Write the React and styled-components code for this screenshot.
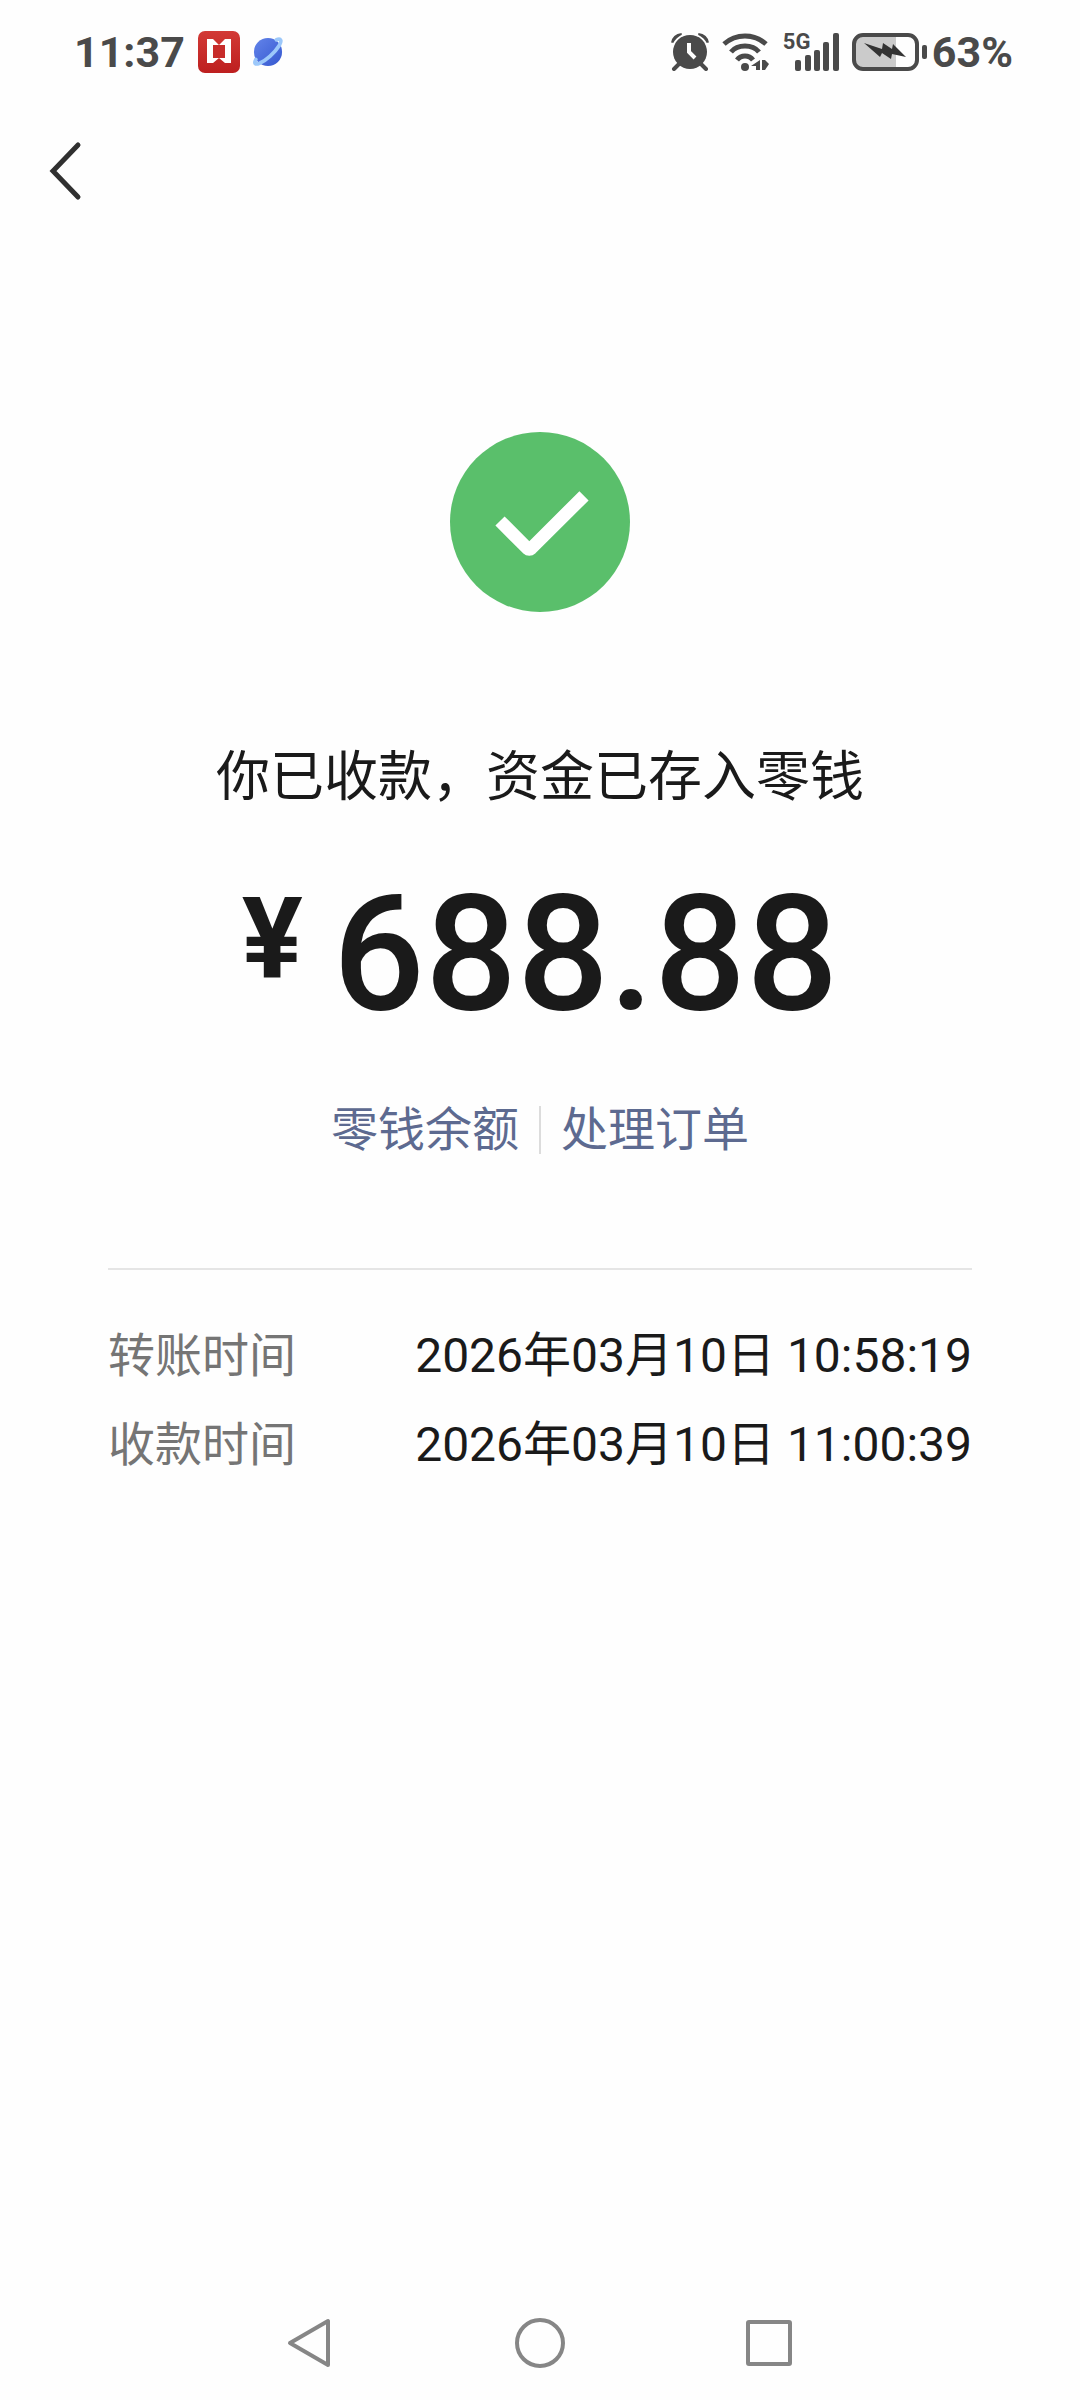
import React from 'react';
import styled, { createGlobalStyle } from 'styled-components';

const GlobalStyle = createGlobalStyle`
    * {
        box-sizing: border-box;
    }
    body {
        margin: 0;
        background: #fefefe;
        color: #1a1a1a;
        font-family: Roboto, 'Noto Sans CJK SC', sans-serif;
    }
    svg {
        display: block;
        flex: none;
    }
`;

const Page = styled.div`
    display: flex;
    flex-direction: column;
    min-height: 100vh;
`;

const StatusBar = styled.div`
    display: flex;
    align-items: center;
    justify-content: space-between;
    height: 103px;
    padding: 0 67px 0 74px;
    color: #4a4a4a;
`;

const StatusGroup = styled.div`
    display: flex;
    align-items: center;
    gap: ${props => props.$gap}px;
`;

const StatusText = styled.span`
    font-size: 43px;
    font-weight: 700;
    line-height: 52px;
`;

const Signal = styled.div`
    position: relative;
    padding-left: 12px;
`;

const NetType = styled.span`
    position: absolute;
    top: 0;
    left: 0;
    font-size: 22px;
    font-weight: 700;
    line-height: 18px;
`;

const Header = styled.header`
    display: flex;
    align-items: center;
    height: 136px;
    padding: 0 36px;
`;

const IconButton = styled.button`
    display: flex;
    align-items: center;
    justify-content: center;
    min-width: 50px;
    height: 64px;
    padding: 0;
    border: 0;
    background: none;
    color: inherit;
`;

const Main = styled.main`
    display: flex;
    flex-direction: column;
    align-items: center;
    padding: 193px 108px 0;
`;

const Title = styled.h1`
    margin: 128px 0 0;
    font-size: 54px;
    font-weight: 400;
    line-height: 76px;
`;

const Amount = styled.div`
    display: flex;
    align-items: flex-start;
    gap: 30px;
    margin-top: 43px;
    font-size: 162px;
    font-weight: 500;
    line-height: 190px;
`;

const Currency = styled.span`
    padding-top: 23px;
    font-size: 114px;
    font-weight: 700;
    line-height: 114px;
`;

const Links = styled.nav`
    display: flex;
    align-items: center;
    margin-top: 57px;
`;

const TextLink = styled.a`
    padding: 0 20px;
    color: #5d6a90;
    font-size: 47px;
    line-height: 48px;
    text-decoration: none;

    & + & {
        border-left: 2px solid #dcdcdc;
    }
`;

const Details = styled.dl`
    width: 100%;
    margin: 114px 0 0;
    padding-top: 41px;
    border-top: 2px solid #e5e5e5;
`;

const DetailRow = styled.div`
    display: flex;
    justify-content: space-between;
    font-size: 47px;
    line-height: 89px;

    dt {
        color: #757575;
    }
    dd {
        margin: 0;
        font-size: 48px;
    }
`;

const NavBar = styled.nav`
    display: flex;
    justify-content: center;
    gap: 180px;
    margin-top: auto;
    padding-bottom: 25px;
    color: #868686;
`;

const details = [
    { id: 1, label: '转账时间', value: '2026年03月10日 10:58:19' },
    { id: 2, label: '收款时间', value: '2026年03月10日 11:00:39' },
];

const RedAppIcon = () => (
    <svg width="42" height="42" viewBox="0 0 42 42">
        <defs>
            <linearGradient id="red" x1="0" y1="0" x2="0" y2="1">
                <stop offset="0" stopColor="#d23a36" />
                <stop offset="1" stopColor="#bd1f1f" />
            </linearGradient>
        </defs>
        <rect width="42" height="42" rx="7" fill="url(#red)" />
        <path d="M9 8h6l6 6 6-6h6v24h-6l-6-5-6 5H9z" fill="#fff" />
        <path d="M15 14h12v13H15z" fill="#c72c2a" />
    </svg>
);

const PlanetIcon = () => (
    <svg width="30" height="30" viewBox="0 0 32 32">
        <defs>
            <linearGradient id="planet" x1="0" y1="0" x2="1" y2="1">
                <stop offset="0" stopColor="#6384ea" />
                <stop offset="1" stopColor="#3558cf" />
            </linearGradient>
        </defs>
        <circle cx="16" cy="16" r="15" fill="url(#planet)" />
        <path
            d="M25 3C30 1 31 4 28 9C23 17 14 25 7 28C2 30 1 28 3 24"
            fill="none"
            stroke="#9cc8fa"
            strokeWidth="4"
            strokeLinecap="round"
        />
    </svg>
);

const AlarmIcon = () => (
    <svg width="38" height="38" viewBox="0 0 38 38" fill="none" stroke="currentColor">
        <path d="M3 10Q4 4 11 3M27 3Q34 4 35 10" strokeWidth="6" />
        <path d="M8 31l-5 5M30 31l5 5" strokeWidth="4" strokeLinecap="round" />
        <circle cx="19" cy="19" r="18" stroke="#fefefe" strokeWidth="2" strokeDasharray="56 57" strokeDashoffset="56" />
        <circle cx="19" cy="19" r="17" fill="currentColor" stroke="none" />
        <path d="M18 10v9l6 6" stroke="#fefefe" strokeWidth="4" />
    </svg>
);

const WifiIcon = () => (
    <svg width="48" height="38" viewBox="0 0 48 38" fill="none" stroke="currentColor" strokeWidth="5">
        <path d="M2 11Q11 3 23 3T44 11" />
        <path d="M9 19Q14 13 23 13T37 19" />
        <path d="M15 27Q18 23 23 23T31 27" />
        <circle cx="23" cy="34" r="4" fill="currentColor" stroke="none" />
        <path d="M38 27v10h-4v-4h-5zM40 27h3l4 4-4 6h-3z" fill="currentColor" stroke="none" />
    </svg>
);

const SignalIcon = () => (
    <svg width="44" height="38" viewBox="0 0 44 38" fill="currentColor">
        <rect x="0" y="27" width="6" height="11" rx="2" />
        <rect x="10" y="22" width="6" height="16" rx="2" />
        <rect x="19" y="17" width="6" height="21" rx="2" />
        <rect x="28" y="9" width="6" height="29" rx="2" />
        <rect x="38" y="0" width="6" height="38" rx="2" />
    </svg>
);

const BatteryIcon = () => (
    <svg width="76" height="38" viewBox="0 0 76 38">
        <rect x="3" y="3" width="41" height="32" rx="8" fill="#cbcbcb" />
        <rect x="34" y="3" width="10" height="32" fill="#cbcbcb" />
        <rect x="2" y="2" width="63" height="34" rx="9" fill="none" stroke="currentColor" strokeWidth="4" />
        <rect x="70" y="12" width="5" height="14" rx="2" fill="currentColor" />
        <path d="M12 10l18 6 1-6 9 6 1-5 13 13-14-3-1 5-9-6-2 4z" fill="#333" />
    </svg>
);

const BackIcon = () => (
    <svg width="50" height="64" viewBox="0 0 50 64">
        <path d="M42 6L17 32l25 26" fill="none" stroke="#303030" strokeWidth="5" strokeLinecap="round" />
    </svg>
);

const SuccessIcon = () => (
    <svg width="180" height="180" viewBox="0 0 180 180" role="img" aria-label="成功">
        <circle cx="90" cy="90" r="90" fill="#5abf6b" />
        <path
            d="M50 89l27.5 27.5q1.8 1.7 3.6 0L134 63.8"
            fill="none"
            stroke="#fff"
            strokeWidth="13"
            strokeLinejoin="round"
        />
    </svg>
);

const NavIcon = ({ children }) => (
    <svg width="50" height="50" viewBox="0 0 50 50" fill="none" stroke="currentColor" strokeWidth="4" strokeLinejoin="round">
        {children}
    </svg>
);

const App = () => {
    return (
        <Page>
            <GlobalStyle />
            <StatusBar>
                <StatusGroup $gap={13}>
                    <StatusText>11:37</StatusText>
                    <RedAppIcon />
                    <PlanetIcon />
                </StatusGroup>
                <StatusGroup $gap={13}>
                    <AlarmIcon />
                    <WifiIcon />
                    <Signal>
                        <NetType>5G</NetType>
                        <SignalIcon />
                    </Signal>
                    <StatusGroup $gap={4}>
                        <BatteryIcon />
                        <StatusText>63%</StatusText>
                    </StatusGroup>
                </StatusGroup>
            </StatusBar>
            <Header>
                <IconButton type="button" aria-label="返回">
                    <BackIcon />
                </IconButton>
            </Header>
            <Main>
                <SuccessIcon />
                <Title>你已收款，资金已存入零钱</Title>
                <Amount>
                    <Currency>¥</Currency>
                    <span>688.88</span>
                </Amount>
                <Links>
                    <TextLink href="#balance">零钱余额</TextLink>
                    <TextLink href="#orders">处理订单</TextLink>
                </Links>
                <Details>
                    {
                        details.map(it => {
                            return (
                                <DetailRow key={it.id}>
                                    <dt>{it.label}</dt>
                                    <dd>{it.value}</dd>
                                </DetailRow>
                            )
                        })
                    }
                </Details>
            </Main>
            <NavBar>
                <IconButton type="button" aria-label="后退">
                    <NavIcon>
                        <path d="M43 3v44L5 25z" />
                    </NavIcon>
                </IconButton>
                <IconButton type="button" aria-label="主页">
                    <NavIcon>
                        <circle cx="25" cy="25" r="23" />
                    </NavIcon>
                </IconButton>
                <IconButton type="button" aria-label="最近任务">
                    <NavIcon>
                        <rect x="3" y="4" width="42" height="42" rx="1" />
                    </NavIcon>
                </IconButton>
            </NavBar>
        </Page>
    )
}

export default App;
